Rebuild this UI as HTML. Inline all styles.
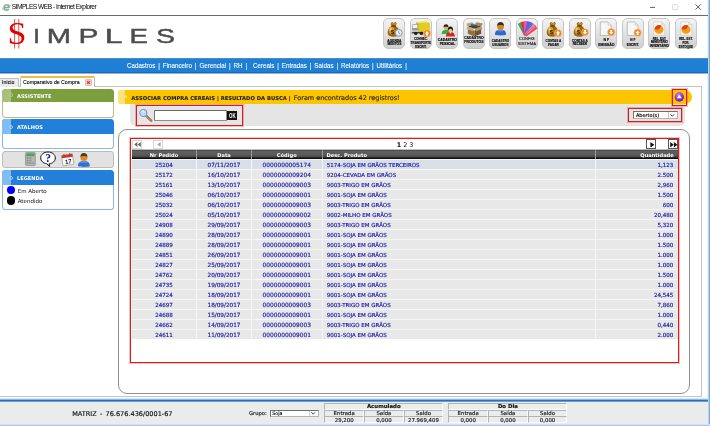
<!DOCTYPE html>
<html lang="pt-BR"><head><meta charset="utf-8"><title>SIMPLES WEB</title>
<style>
*{box-sizing:border-box;margin:0;padding:0}
html,body{width:710px;height:426px;overflow:hidden;background:#fff}
body{position:relative;font-family:"DejaVu Sans","Liberation Sans",sans-serif;font-size:5.7px;color:#000}
#w{position:absolute;left:0;top:0;width:710px;height:426px;will-change:transform;overflow:hidden}
#w>div,#w>svg,.p{position:absolute}
.ls{font-family:"Liberation Sans",sans-serif}
/* window chrome */
#title{left:11.7px;top:3.4px;font:6.6px "Liberation Sans",sans-serif;letter-spacing:-.5px;color:#000;white-space:nowrap;line-height:8px}
#tline{left:0;top:15px;width:708px;height:1px;background:#6a6a6a}
#rstrip{left:707px;top:0;width:3px;height:426px;background:linear-gradient(90deg,#e8f3fb 0,#e8f3fb 33.3%,#b8d5ee 33.3%,#b8d5ee 66.6%,#7ea6ce 66.6%)}
/* menu */
#menu{left:0;top:58px;width:708px;height:16px;background:#1f7fd4;border-top:1px solid #4a8cc8;border-bottom:1px solid #8db6dc;box-shadow:inset 0 -1px 0 #1c68b2}
#menutxt{left:126.7px;top:62.3px;font:7.1px "Liberation Sans",sans-serif;word-spacing:1.38px;transform:scaleX(.877);transform-origin:0 0;-webkit-text-stroke:0.1px #fff;color:#fff;white-space:pre;line-height:8px}
/* toolbar buttons */
.tb{position:absolute;top:18px;width:22px;height:30.5px;border:1px solid #c6c6c6;border-radius:5px;background:linear-gradient(#f4f4f4,#e4e4e4 45%,#cfcfcf);}
.tb svg{position:absolute;left:2px;top:2px;width:17px;height:17px;overflow:visible}
.tb span{position:absolute;left:-4px;width:28px;text-align:center;font:bold 3.1px/3.9px "Liberation Sans",sans-serif;color:#000;white-space:nowrap;-webkit-text-stroke:0.12px #000}
/* tabs */
#cont{left:-1px;top:86px;width:702.5px;height:311px;border:1px solid #c4c4c4}
#tab1{left:-1px;top:77.5px;width:20px;height:9px;background:#ececec;border:1px solid #bdbdbd;border-bottom:none;border-radius:1px 1px 0 0}
#tab2{left:19.5px;top:76px;width:75px;height:11px;background:#fff;border:1px solid #bdbdbd;border-top:2px solid #f3ba48;border-bottom:none;border-radius:1.5px 1.5px 0 0}
.tabt{position:absolute;font:6px/7px "Liberation Sans",sans-serif;color:#000;white-space:nowrap;transform:scaleX(.866);transform-origin:0 0;-webkit-text-stroke:0.12px #000}
/* side panels */
.sp{position:absolute;left:2px;width:111.5px}
.sp .h{position:absolute;left:0;top:0;width:111.5px;height:13.6px;border-radius:3.5px 3.5px 0 0;overflow:hidden}
.sp .l{position:absolute;left:0;top:0;width:8.5px;height:15px}
.sp .d{position:absolute;left:6.7px;top:5.6px;width:4px;height:4px;border-radius:50%;border:0.7px solid #fff;background:transparent !important}
.sp .t{position:absolute;left:15px;top:4.8px;font:bold 5.05px/7px "DejaVu Sans",sans-serif;color:#fff;white-space:nowrap}
.sp .b{position:absolute;left:0;top:13.6px;width:111.5px;border:1px solid #86b8ea;border-top:none;border-radius:0 0 3.5px 3.5px;background:#fff}
.leg{position:absolute;left:17.7px;font:5.5px/7px "DejaVu Sans",sans-serif;color:#111;white-space:nowrap}
/* main */
#ybar{left:117.7px;top:89.7px;width:574px;height:14.3px;background:#fdc400;border-radius:3.5px 7px 7px 3.5px;overflow:hidden}
#gbox{left:129.5px;top:104px;width:555.5px;height:22.3px;background:#e5e5e5;border-radius:0 0 5px 5px}
.red{position:absolute;border:1px solid #e01818;box-shadow:0 0 0 1px rgba(224,24,24,.28)}
#inner{left:118px;top:129px;width:572px;height:265px;border:1px solid #8e8e8e;border-radius:9px;background:#fff}
#thead{left:132px;top:150px;width:546px;height:9px;box-shadow:0 -1px 0 rgba(70,70,70,.35);background:linear-gradient(#3e3e3e 0,#5f5f5f 12%,#5a5a5a 55%,#484848 75%,#141414 90%,#0a0a0a)}
.th{position:absolute;top:1.6px;font:bold 5.1px/7px "DejaVu Sans",sans-serif;color:#fff;white-space:nowrap}
.sep{position:absolute;top:0;width:1px;height:9px;background:#9a9a9a}
.tr{position:absolute;left:132px;width:546px;height:10px;background:#e8e8e8;border-top:1px solid #f6f6f6;color:#1818a8;font:5.8px/9px "DejaVu Sans",sans-serif;white-space:nowrap;-webkit-text-stroke:0.17px #1818a8}
.tr.hl{background:#d9dfe6}
.tr span{position:absolute;top:1.2px}
.c1{left:0;width:64px;text-align:center;font-size:5.55px}
.c2{left:65px;width:54px;text-align:center;font-size:5.72px}
.c3{left:120px;width:69.5px;text-align:center;font-size:5.88px}
.c4{left:194.7px;font-size:5.5px}
.c5{right:4.7px;text-align:right;font-size:5.55px}
.vs{position:absolute;top:159px;width:1px;height:180px;background:#f5f5f5}
.nb{position:absolute;top:140px;width:10px;height:9px;border:1px solid #d8d8d8;background:#fff}
/* footer */
#fband{left:0;top:398px;width:708px;height:4px;background:linear-gradient(#d6e7f7 0,#d6e7f7 25%,#86b9e8 25%,#86b9e8 50%,#2272c8 50%,#2272c8 75%,#6f99c9 75%)}
#fbg{left:0;top:402px;width:708px;height:22px;background:#ebebeb}
#fbl{left:0;top:424px;width:710px;height:2px;background:linear-gradient(#d2e1f1 0,#d2e1f1 50%,#a9c8ea 50%)}
.ft{position:absolute;font:5.3px/7px "DejaVu Sans",sans-serif;color:#111;white-space:nowrap;-webkit-text-stroke:0.15px #111}
.cell{position:absolute;height:7px;background:#ececec;border:1px solid #fcfcfc;border-top-color:#b4b4b4;border-left-color:#b4b4b4;text-align:center;font:5.4px/6px "DejaVu Sans",sans-serif;color:#111;-webkit-text-stroke:0.15px #111}

</style></head>
<body><div id="w">
<!-- window chrome -->
<div id="rstrip"></div>
<svg style="left:1.500px;top:2.800px" width="9" height="9" viewBox="0 0 9 9">
  <circle cx="4.600" cy="4.600" r="3.300" fill="#4aa6e6"/>
  <circle cx="4.600" cy="4.500" r="1.700" fill="#e4f2fc"/>
  <rect x="2.600" y="4.100" width="5.200" height="1" fill="#4aa6e6"/>
  <rect x="5" y="5.100" width="3.200" height="1.100" fill="#fff"/>
  <ellipse cx="4.400" cy="4.300" rx="4.300" ry="1.900" fill="none" stroke="#f0c63c" stroke-width="0.800" transform="rotate(-30 4.400 4.300)"/>
</svg>
<div id="title">SIMPLES WEB - Internet Explorer</div>
<svg style="left:645px;top:2px" width="60" height="12" viewBox="0 0 60 12">
  <path d="M5 5.4h5" stroke="#222" stroke-width="0.7" fill="none"/>
  <rect x="27.4" y="2.6" width="5.4" height="5" rx="0.6" fill="none" stroke="#c8c8c8" stroke-width="0.6"/>
  <path d="M50.5 2.3l5.4 5.4M55.9 2.3l-5.4 5.4" stroke="#222" stroke-width="0.75" fill="none"/>
</svg>
<div id="tline"></div>

<!-- logo -->
<svg style="left:0;top:16px" width="190" height="40" viewBox="0 0 190 40">
  <defs>
    <linearGradient id="lg" gradientUnits="userSpaceOnUse" x1="35" y1="8" x2="178" y2="30">
      <stop offset="0" stop-color="#4c4c4c"/><stop offset="0.55" stop-color="#626262"/><stop offset="1" stop-color="#9c9c9c"/>
    </linearGradient>
  </defs>
  <text transform="translate(7.55 28.4) scale(1.1 1)" font-family="Liberation Serif, serif" font-size="31" fill="#e00000">S</text>
  <path d="M14.6 3v29.6M18.8 3v29.6" stroke="#e00000" stroke-width="0.7" fill="none"/>
  <g font-family="Liberation Sans, sans-serif" font-size="20.6" fill="url(#lg)" stroke="url(#lg)" stroke-width="0.45">
    <text transform="translate(33.24 27) scale(1.154 1)">I</text>
    <text transform="translate(46.63 27) scale(1.413 1)">M</text>
    <text transform="translate(78.46 27) scale(1.455 1)">P</text>
    <text transform="translate(104.82 27) scale(1.543 1)">L</text>
    <text transform="translate(129.54 27) scale(1.341 1)">E</text>
    <text transform="translate(156.01 27) scale(1.382 1)">S</text>
  </g>
</svg>

<!-- toolbar -->
<div class="tb" style="left:383.4px">
  <svg viewBox="0 0 17 17"><g transform="translate(-1.6 -0.9) scale(1.13)"><path d="M5.500 3.200l1.200-1.600 1.600.9 1.700-1 1 1.800-1.300 1.600c2.600 1.600 3.900 4.500 3.300 7.200-.4 1.900-2.200 2.600-5 2.600s-4.700-.7-5-2.600c-.5-2.800.9-5.600 3.400-7.200z" fill="#9a6410"/><path d="M6.200 3.400l.9-1.100 1.300.7 1.400-.8.600 1.100-1 1.300z" fill="#c89028"/><path d="M6 5.200h4.200" stroke="#5a3608" stroke-width="0.900"/><ellipse cx="6.400" cy="9.300" rx="2.500" ry="3.400" fill="#d49a2c"/><ellipse cx="5.600" cy="8.200" rx="1.100" ry="1.700" fill="#f0c860"/><text x="5.600" y="11.900" font-family="Liberation Sans, sans-serif" font-size="5.400" font-weight="bold" fill="#2a1a04">$</text></g><circle cx="12.700" cy="11.800" r="3.500" fill="#d4dce6" stroke="#8792a2" stroke-width="0.800"/><circle cx="12.700" cy="11.800" r="2.300" fill="#f2f5f8"/><path d="M12.700 10v2l1.300.8" stroke="#4a5666" stroke-width="0.600" fill="none"/></svg>
  <span style="top:20.5px;font-size:3.250px">AGENDA</span><span style="top:24.4px;font-size:3.250px">MENTOS</span>
</div>
<div class="tb" style="left:409.9px">
  <svg viewBox="0 0 17 17"><path d="M3 1.200l10.600-.700 3 1.600v8.700h-13.600z" fill="#d6c412"/><path d="M3 1.200l10.600-.700 3 1.600-10.800.5z" fill="#efe25a"/><path d="M5.800 2.600l10.800-.5v8.700h-10.800z" fill="#e0cf1e"/><path d="M-1 5.200c0-1.400.8-2.200 2.200-2.200h4v8.200h-6.200z" fill="#9a9a9a"/><path d="M-0.400 5.400c0-1 .5-1.600 1.500-1.600h3.300v3.300h-4.800z" fill="#eef2f6"/><rect x="-1.200" y="9.400" width="6.600" height="2" fill="#d8d8d8"/><rect x="-1.200" y="10.900" width="17.800" height="1.500" fill="#3c3c3c"/><circle cx="2.800" cy="12.400" r="1.700" fill="#1c1c1c"/><circle cx="8.400" cy="12.400" r="1.700" fill="#1c1c1c"/><circle cx="14" cy="12.4" r="3.7" fill="#f0861a" stroke="#f9c890" stroke-width="0.600"/><path d="M14 10.0l2.200 2.500h-1.300v2.100h-1.800v-2.100h-1.300z" fill="#fff"/></svg>
  <span style="top:19.4px;font-size:2.900px">CONHEC.</span><span style="top:23.1px;font-size:2.950px">TRANSPORTE</span><span style="top:26.8px;font-size:2.950px">ESCRIT.</span>
</div>
<div class="tb" style="left:436.4px">
  <svg viewBox="0 0 17 17"><g transform="translate(1.200 1) scale(0.900)"><circle cx="6.400" cy="6.100" r="2.600" fill="#e7b27a"/><path d="M3.700 5.700c0-2.300 1.200-3.200 2.800-3.200s2.700 1 2.600 3c-1.700.2-3.400-.5-5.400.2z" fill="#2e2010"/><path d="M1.600 13.300c0-3.300 2-4.700 4.800-4.700s4.800 1.400 4.800 4.700z" fill="#34b048"/><circle cx="11.300" cy="8.800" r="2.700" fill="#ecc090"/><path d="M8.400 9.200c-.3-2.700 1-4.200 2.900-4.200s3.300 1.400 2.900 4.400l-.6 1.700c.2-2.100-.4-3.600-2.300-3.600s-2.600 1.500-2.300 3.500z" fill="#24140a"/><path d="M6.300 16c0-3.300 2.100-4.900 5-4.900s5 1.600 5 4.900z" fill="#d22820"/><path d="M10 11.200l1.300 2.100 1.300-2.100z" fill="#f3d9c0"/></g></svg>
  <span style="top:19.8px;font-size:3.400px">CADASTRO</span><span style="top:24.2px;font-size:3.250px">PESSOAL</span>
</div>
<div class="tb" style="left:462.9px">
  <svg viewBox="0 0 17 17"><g transform="translate(0 -0.600)"><path d="M1.800 6.200l6.700 2.200v7.600l-6.700-2.600z" fill="#8e7044"/><path d="M8.500 8.400l6.700-2.200v7.200l-6.700 2.600z" fill="#6e5430"/><path d="M1.800 6.200l6.700-2.200 6.700 2.200-6.700 2.200z" fill="#3e4046"/><path d="M1.800 6.200l-1.500-2.900 6-1.500 2.200 2.200z" fill="#bfa070"/><path d="M15.200 6.200l1.600-3-6.100-1.400-2.200 2.200z" fill="#a88a58"/><path d="M15.200 6.200l1.200 2.500-6.400 2.300-1.500-2.600z" fill="#b4955f"/><path d="M1.800 6.200l-1.300 2.300 6.500 2.300 1.500-2.400z" fill="#c9ab7c"/><rect x="4.800" y="4" width="5" height="1.700" fill="#3058a0" transform="rotate(12 7 5)"/><circle cx="8.300" cy="9.200" r="0.900" fill="#f4f4f4"/></g></svg>
  <span style="top:17.8px;font-size:3.450px">CADASTRO</span><span style="top:22.3px;font-size:3.450px">PRODUTOS</span>
</div>
<div class="tb" style="left:489.4px">
  <svg viewBox="0 0 17 17"><g transform="translate(0.700 -1.200) scale(0.920)"><path d="M2.500 16.300c-.3-4 2.300-5.800 6-5.800s6.300 1.800 6 5.800c-2 .9-10 .9-12 0z" fill="#2b68d0"/><path d="M4.500 12c1.200-1 2.500-1.400 4-1.400s2.800.4 4 1.400c-1 .8-7 .8-8 0z" fill="#5d97ee"/><circle cx="8.500" cy="7.300" r="3.700" fill="#d8841c"/><path d="M4.800 6.600c-.2-2.900 1.500-4.300 3.700-4.300s3.900 1.400 3.700 4.300c-1.400-1.400-6-1.400-7.400 0z" fill="#3e3024"/></g></svg>
  <span style="top:20.5px">CADASTRO</span><span style="top:25px">USUÁRIOS</span>
</div>
<div class="tb" style="left:515.9px">
  <svg viewBox="0 0 17 17"><g transform="translate(6.500 14.200)"><path d="M-1.500 0l-1.400-13.600 3.600 0 0.800 13.600z" fill="#2fae6c" transform="rotate(-22)"/><path d="M-1.500 0l-1.400-13.800 3.600 0 0.800 13.800z" fill="#e23434" transform="rotate(-8)"/><path d="M-1.500 0l-1.400-14 3.600 0 0.800 14z" fill="#e85ab8" transform="rotate(6)"/><path d="M-1.500 0l-1.400-14 3.600 0 0.800 14z" fill="#8a4ad8" transform="rotate(19)"/><path d="M-1.500 0l-1.400-14 3.600 0 0.800 14z" fill="#3a7ae6" transform="rotate(32)"/><path d="M-1.500 0l-1.400-14 3.600 0 0.800 14z" fill="#f27a9a" transform="rotate(46)"/><path d="M-1.500 0l-1.400-13.600 3.600 0 0.800 13.600z" fill="#ea4a5e" transform="rotate(58)"/><path d="M-0.300 -2l-0.500 -11" stroke="#fff" stroke-width="0.400" transform="rotate(52)"/></g></svg>
  <span style="top:18.4px;font-weight:normal;font-size:4px;color:#333">CONFIG</span><span style="top:22.4px;font-weight:normal;font-size:4.200px;line-height:5px;color:#333">SISTEMA</span>
</div>
<div class="tb" style="left:542.4px">
  <svg viewBox="0 0 17 17"><g transform="translate(-1.6 -0.9) scale(1.13)"><path d="M5.500 3.200l1.200-1.600 1.600.9 1.700-1 1 1.800-1.300 1.600c2.600 1.600 3.900 4.500 3.300 7.200-.4 1.900-2.200 2.600-5 2.600s-4.700-.7-5-2.600c-.5-2.800.9-5.600 3.400-7.200z" fill="#9a6410"/><path d="M6.200 3.400l.9-1.100 1.300.7 1.400-.8.600 1.100-1 1.300z" fill="#c89028"/><path d="M6 5.200h4.200" stroke="#5a3608" stroke-width="0.900"/><ellipse cx="6.400" cy="9.300" rx="2.500" ry="3.400" fill="#d49a2c"/><ellipse cx="5.600" cy="8.200" rx="1.100" ry="1.700" fill="#f0c860"/><text x="5.600" y="11.900" font-family="Liberation Sans, sans-serif" font-size="5.400" font-weight="bold" fill="#2a1a04">$</text></g><circle cx="13" cy="12.2" r="3.7" fill="#f0861a" stroke="#f9c890" stroke-width="0.600"/><path d="M13 9.799999999999999l2.200 2.500h-1.300v2.100h-1.800v-2.100h-1.300z" fill="#fff"/></svg>
  <span style="top:20.9px">CONTAS A</span><span style="top:24.6px">PAGAR</span>
</div>
<div class="tb" style="left:568.9px">
  <svg viewBox="0 0 17 17"><g transform="translate(-1.6 -0.9) scale(1.13)"><path d="M5.500 3.200l1.200-1.600 1.600.9 1.700-1 1 1.800-1.300 1.600c2.600 1.600 3.900 4.500 3.300 7.200-.4 1.900-2.200 2.600-5 2.600s-4.700-.7-5-2.600c-.5-2.800.9-5.600 3.400-7.200z" fill="#9a6410"/><path d="M6.200 3.400l.9-1.100 1.300.7 1.400-.8.600 1.100-1 1.300z" fill="#c89028"/><path d="M6 5.200h4.200" stroke="#5a3608" stroke-width="0.900"/><ellipse cx="6.400" cy="9.300" rx="2.500" ry="3.400" fill="#d49a2c"/><ellipse cx="5.600" cy="8.200" rx="1.100" ry="1.700" fill="#f0c860"/><text x="5.600" y="11.900" font-family="Liberation Sans, sans-serif" font-size="5.400" font-weight="bold" fill="#2a1a04">$</text></g><circle cx="13" cy="11.2" r="3.5" fill="#f0861a" stroke="#f9c890" stroke-width="0.600"/><path d="M13 13.6l2.200-2.500h-1.300v-2.100h-1.800v2.100h-1.300z" fill="#fff"/></svg>
  <span style="top:20.6px">CONTAS A</span><span style="top:24.2px;font-size:2.950px">RECEBER</span>
</div>
<div class="tb" style="left:595.4px">
  <svg viewBox="0 0 17 17"><path d="M2.300 1h7.600l3.200 3.200v10.300h-10.800z" fill="#f7f7f7" stroke="#a8a8a8" stroke-width="0.700"/><path d="M9.900 1v3.200h3.200" fill="#e4e4e4" stroke="#c2c2c2" stroke-width="0.500"/><circle cx="13.2" cy="11.2" r="3.7" fill="#f0861a" stroke="#f9c890" stroke-width="0.600"/><path d="M13.2 13.6l2.200-2.500h-1.300v-2.100h-1.800v2.100h-1.300z" fill="#fff"/></svg>
  <span style="top:20.4px;font-size:3.550px">N F</span><span style="top:24.6px;font-size:3.550px">EMISSÃO</span>
</div>
<div class="tb" style="left:621.9px">
  <svg viewBox="0 0 17 17"><path d="M2.300 1h7.600l3.200 3.200v10.300h-10.800z" fill="#f7f7f7" stroke="#a8a8a8" stroke-width="0.700"/><path d="M9.900 1v3.200h3.200" fill="#e4e4e4" stroke="#c2c2c2" stroke-width="0.500"/><circle cx="12.6" cy="11.8" r="3.7" fill="#f0861a" stroke="#f9c890" stroke-width="0.600"/><path d="M12.6 9.4l2.200 2.500h-1.300v2.100h-1.800v-2.100h-1.300z" fill="#fff"/></svg>
  <span style="top:20.4px;font-size:3.200px">N F</span><span style="top:24.6px;font-size:3.200px">ESCRIT.</span>
</div>
<div class="tb" style="left:648.4px">
  <svg viewBox="0 0 17 17"><path d="M2.600 0.800h8.200l3 3v10.400h-11.200z" fill="#f7f7f7" stroke="#c6c6c6" stroke-width="0.600"/><path d="M10.800 0.800v3h3" fill="#e4e4e4" stroke="#c2c2c2" stroke-width="0.500"/><circle cx="8" cy="8.600" r="4.500" fill="#f49a18"/><path d="M8 8.600l-4.500-.4a4.500 4.500 0 0 1 6.900-3.400z" fill="#d8460e"/><path d="M4.600 11.300a4.300 4.300 0 0 0 6.800 0 9 9 0 0 1-6.800 0z" fill="#fbc648"/></svg>
  <span style="top:19px;font-size:2.900px">REL. EST.</span><span style="top:22.3px;font-size:2.900px">MINISTÉRIO</span><span style="top:25.8px">INVENTÁRIO</span>
</div>
<div class="tb" style="left:674.9px">
  <svg viewBox="0 0 17 17"><path d="M2.600 0.800h8.200l3 3v10.400h-11.200z" fill="#f7f7f7" stroke="#c6c6c6" stroke-width="0.600"/><path d="M10.800 0.800v3h3" fill="#e4e4e4" stroke="#c2c2c2" stroke-width="0.500"/><circle cx="8" cy="8.600" r="4.500" fill="#f49a18"/><path d="M8 8.600l-4.500-.4a4.500 4.500 0 0 1 6.900-3.400z" fill="#d8460e"/><path d="M4.600 11.300a4.300 4.300 0 0 0 6.800 0 9 9 0 0 1-6.800 0z" fill="#fbc648"/></svg>
  <span style="top:19.2px;font-size:2.900px">REL. EST.</span><span style="top:22.7px;font-size:2.800px">POR.</span><span style="top:26.6px;font-size:2.900px">ESTOQUE</span>
</div>

<!-- menu -->
<div id="menu"></div>
<div id="menutxt">Cadastros | Financeiro | Gerencial | RH |  Cereais | Entradas | Saídas | Relatórios | Utilitários |</div>

<!-- tabs -->
<div id="cont"></div>
<div id="tab1"><span class="tabt" style="left:1.9px;top:0.9px">Início</span></div>
<div id="tab2"><span class="tabt" style="left:2.8px;top:0.9px">Comparativo de Compra</span>
  <svg style="position:absolute;left:64.7px;top:1.3px" width="7" height="7" viewBox="0 0 7 7"><rect x="0.400" y="0.400" width="6.200" height="6.200" rx="0.800" fill="#f7d2d2" stroke="#cfa4a4" stroke-width="0.700"/><path d="M2.100 2.100l2.800 2.800M4.900 2.100l-2.800 2.800" stroke="#e03434" stroke-width="1.300"/></svg>
</div>

<!-- side panels -->
<div class="sp" style="top:88.6px;height:29px">
  <div class="b" style="height:15.400px;border-color:#b9b98f"></div>
  <div class="h" style="background:#7c9e3c"><div class="l" style="background:#a9c07c"></div><div class="d" style="border-color:#b4c98c;top:4.900px"></div></div>
  <span class="t">ASSISTENTE</span>
</div>
<div class="sp" style="top:119.200px;height:29.400px">
  <div class="b" style="height:15.400px;top:14px"></div>
  <div class="h" style="background:#2280da;height:14.400px"><div class="l" style="background:#80bdf4"></div><div class="d" style="border-color:#a4d2fa;border-width:0.9px"></div></div>
  <span class="t" style="top:5.100px">ATALHOS</span>
</div>
<div class="p" style="left:2px;top:151.300px;width:111.500px;height:16.500px;background:#e2e2e2;border:1px solid #bcbcbc;border-radius:3px"></div>
<svg style="left:24px;top:151px" width="70" height="17" viewBox="0 0 70 17">
  <!-- calculator -->
  <rect x="1.500" y="1.600" width="9.800" height="13" rx="0.800" fill="#b2b6b0" stroke="#868b86" stroke-width="0.700"/>
  <rect x="2.400" y="2.400" width="8" height="2.800" fill="#48a860"/>
  <g fill="#8c918c"><rect x="2.600" y="6.300" width="1.900" height="1.600"/><rect x="5.400" y="6.300" width="1.900" height="1.600"/><rect x="8.200" y="6.300" width="1.900" height="1.600" fill="#e8b070"/><rect x="2.600" y="8.800" width="1.900" height="1.600"/><rect x="5.400" y="8.800" width="1.900" height="1.600"/><rect x="8.200" y="8.800" width="1.900" height="1.600" fill="#e8b070"/><rect x="2.600" y="11.300" width="1.900" height="1.600"/><rect x="5.400" y="11.300" width="1.900" height="1.600"/><rect x="8.200" y="11.300" width="1.900" height="1.600" fill="#7aa0e0"/></g>
  <!-- help bubble -->
  <path d="M24 1c4.200 0 7.300 2.500 7.300 5.900s-2.700 5.600-6.200 5.900l.6 2.700-3-2.800c-3.500-.5-6-2.700-6-5.800 0-3.400 3.100-5.900 7.300-5.900z" fill="#fff" stroke="#111" stroke-width="1"/>
  <text x="21.300" y="10.900" font-family="Liberation Serif, serif" font-weight="bold" font-size="11.500" fill="#14149c">?</text>
  <!-- calendar -->
  <g transform="rotate(-8 43.500 9)"><rect x="38.200" y="3.600" width="11" height="10.600" rx="0.800" fill="#fbfbfb" stroke="#8a8a8a" stroke-width="0.600"/><rect x="38.200" y="3.600" width="11" height="3" fill="#d8322a"/><text x="40.600" y="12.900" font-family="Liberation Sans, sans-serif" font-weight="bold" font-size="6.200" fill="#222">17</text><rect x="40.300" y="2.400" width="0.900" height="2.400" fill="#555"/><rect x="46.200" y="2.400" width="0.900" height="2.400" fill="#555"/></g>
  <!-- user -->
  <path d="M54 15.300c-.3-3.800 2.200-5.400 5.900-5.400s6.200 1.600 5.900 5.400c-2 .8-9.800.8-11.800 0z" fill="#2f6fd6"/>
  <path d="M56 11.300c1.200-.9 2.400-1.300 3.900-1.300s2.700.4 3.900 1.300c-1 .7-6.800.7-7.800 0z" fill="#5d97ee"/>
  <circle cx="59.900" cy="6.600" r="3.500" fill="#e08a1e"/>
  <path d="M56.400 6c-.2-2.800 1.400-4.100 3.500-4.100s3.700 1.300 3.500 4.100c-1.300-1.300-5.700-1.300-7-0z" fill="#4a3a2a"/>
</svg>
<div class="sp" style="top:170.200px;height:39.400px">
  <div class="b" style="height:25.600px;top:14px"></div>
  <div class="h" style="background:#2280da;height:14.400px"><div class="l" style="background:#80bdf4"></div><div class="d" style="border-color:#a4d2fa;border-width:0.9px"></div></div>
  <span class="t" style="top:5.100px">LEGENDA</span>
  <div style="position:absolute;left:4.700px;top:15.500px;width:8.600px;height:8.600px;border-radius:50%;background:#0000fe"></div>
  <div style="position:absolute;left:4.700px;top:26px;width:8.600px;height:8.600px;border-radius:50%;background:#000"></div>
  <span class="leg" style="left:15.700px;top:17.900px">Em Aberto</span>
  <span class="leg" style="left:15.700px;top:28.300px">Atendido</span>
</div>

<!-- main area -->
<div id="ybar"><div style="position:absolute;left:0;top:0;width:7.500px;height:14.300px;background:#ffe27a"></div><div style="position:absolute;left:6px;top:5.400px;width:3.200px;height:3.200px;border-radius:50%;background:#ffe27a"></div></div>
<div class="p" style="left:131.300px;top:94.700px;font:bold 5.250px/7px 'DejaVu Sans',sans-serif;color:#222;-webkit-text-stroke:0.1px #222;white-space:nowrap">ASSOCIAR COMPRA CEREAIS | RESULTADO DA BUSCA |</div>
<div class="p" style="left:293.800px;top:93.500px;font:6.480px/8px 'DejaVu Sans',sans-serif;color:#26261a;-webkit-text-stroke:0.15px #26261a;white-space:nowrap">Foram encontrados 42 registros!</div>
<svg style="left:674px;top:92px" width="11" height="11" viewBox="0 0 11 11"><defs><radialGradient id="pg" cx="0.400" cy="0.300" r="0.800"><stop offset="0" stop-color="#d07af0"/><stop offset="0.600" stop-color="#8a2fd0"/><stop offset="1" stop-color="#5a14a0"/></radialGradient></defs><circle cx="5.300" cy="5" r="4.700" fill="url(#pg)"/><path d="M5.300 2.600l2.500 3.600h-5z" fill="#fff"/></svg>
<div id="gbox"></div>
<div class="red" style="left:671.700px;top:89.200px;width:15.200px;height:16.500px"></div>
<div class="red" style="left:135.500px;top:105.200px;width:107.800px;height:20.400px"></div>
<svg style="left:139px;top:108px" width="15" height="15" viewBox="0 0 15 15"><path d="M7.200 7.900l5 4.700" stroke="#86683c" stroke-width="2.300" stroke-linecap="round"/><path d="M7.200 7.900l5 4.700" stroke="#d8b478" stroke-width="0.800" stroke-linecap="round"/><circle cx="4.300" cy="5" r="3.500" fill="#c4dcf8" stroke="#7494d8" stroke-width="1.100"/><path d="M2.300 4.300a2.400 2.400 0 0 1 2.500-1.700" stroke="#fff" stroke-width="0.800" fill="none"/></svg>
<div class="p" style="left:154.300px;top:110.300px;width:72.600px;height:10.400px;background:#fff;border:1px solid #8e8e8e;border-top-color:#6a6a6a;border-left-color:#767676;border-radius:1px"></div>
<div class="p" style="left:227px;top:110.800px;width:9.800px;height:9.200px;background:#111"><span style="position:absolute;left:1.600px;top:1.100px;color:#fff;font:bold 6.300px/7px 'Liberation Sans',sans-serif;transform:scaleX(.7);transform-origin:0 0">OK</span></div>
<div class="red" style="left:628.300px;top:108.200px;width:54px;height:14px"></div>
<div class="p" style="left:633.400px;top:111px;width:44.800px;height:8.400px;background:#fff;border:1px solid #b4b4b4;border-top-color:#6e6e6e;border-left-color:#6e6e6e"><span style="position:absolute;left:1.500px;top:0.200px;font:5px/6px 'DejaVu Sans',sans-serif;color:#000;-webkit-text-stroke:0.15px #000">Aberto(s)</span><div style="position:absolute;right:0;top:0;width:9.500px;height:6.400px;background:#fafafa;border-left:1px solid #c8c8c8"></div><svg style="position:absolute;right:2.300px;top:1.900px" width="4.600" height="3" viewBox="0 0 4.600 3"><path d="M0.500 0.400l1.800 1.900 1.800-1.900" fill="none" stroke="#222" stroke-width="0.800"/></svg></div>

<div id="inner"></div>
<div class="red" style="left:129.600px;top:138.400px;width:549.400px;height:224.500px;border-color:#dc1c1c"></div>
<!-- pager -->
<div class="nb" style="left:132px"><svg style="position:absolute;left:1px;top:1.300px" width="7" height="5" viewBox="0 0 7 5"><path d="M3.400 0v5l-3.200-2.500zM6.800 0v5l-3.200-2.500z" fill="#6a6a6a"/></svg></div>
<div class="nb" style="left:153.400px"><svg style="position:absolute;left:2.500px;top:1.300px" width="4" height="5" viewBox="0 0 4 5"><path d="M3.600 0v5l-3.400-2.500z" fill="#a8a8a8"/></svg></div>
<div class="nb" style="left:646.300px;top:139px;height:10px;border-color:#555"><svg style="position:absolute;left:2.300px;top:1.500px" width="4.600" height="5.600" viewBox="0 0 4 5"><path d="M0.300 0v5l3.500-2.500z" fill="#111"/></svg></div>
<div class="nb" style="left:668.400px;top:139px;height:10px;border-color:#555"><svg style="position:absolute;left:0.600px;top:1.500px" width="7.600" height="5.600" viewBox="0 0 7 5"><path d="M0.200 0v5l3.200-2.500zM3.600 0v5l3.200-2.500z" fill="#111"/></svg></div>
<div class="p" style="left:385px;top:140.900px;width:40px;text-align:center;font:6.400px/8px 'DejaVu Sans',sans-serif;color:#111;white-space:nowrap"><b>1</b> 2 3</div>
<!-- table -->
<div id="thead">
  <span class="th" style="left:0;width:64px;text-align:center">Nr Pedido</span>
  <span class="th" style="left:65px;width:54px;text-align:center">Data</span>
  <span class="th" style="left:120px;width:69.500px;text-align:center">Código</span>
  <span class="th" style="left:194.500px">Desc. Produto</span>
  <span class="th" style="right:4.300px">Quantidade</span>
  <div class="sep" style="left:64px"></div><div class="sep" style="left:119px"></div><div class="sep" style="left:189.500px"></div><div class="sep" style="left:463px"></div>
</div>
<div class="tr hl" style="top:159px"><span class="c1">25204</span><span class="c2">07/11/2017</span><span class="c3">0000000005174</span><span class="c4">5174-SOJA EM GRÃOS TERCEIROS</span><span class="c5">1,123</span></div>
<div class="tr" style="top:169px"><span class="c1">25172</span><span class="c2">16/10/2017</span><span class="c3">0000000009204</span><span class="c4">9204-CEVADA EM GRÃOS</span><span class="c5">2.500</span></div>
<div class="tr" style="top:179px"><span class="c1">25161</span><span class="c2">13/10/2017</span><span class="c3">0000000009003</span><span class="c4">9003-TRIGO EM GRÃOS</span><span class="c5">2,960</span></div>
<div class="tr" style="top:189px"><span class="c1">25046</span><span class="c2">06/10/2017</span><span class="c3">0000000009001</span><span class="c4">9001-SOJA EM GRÃOS</span><span class="c5">1.500</span></div>
<div class="tr" style="top:199px"><span class="c1">25032</span><span class="c2">06/10/2017</span><span class="c3">0000000009003</span><span class="c4">9003-TRIGO EM GRÃOS</span><span class="c5">600</span></div>
<div class="tr" style="top:209px"><span class="c1">25024</span><span class="c2">05/10/2017</span><span class="c3">0000000009002</span><span class="c4">9002-MILHO EM GRÃOS</span><span class="c5">20,480</span></div>
<div class="tr" style="top:219px"><span class="c1">24908</span><span class="c2">29/09/2017</span><span class="c3">0000000009003</span><span class="c4">9003-TRIGO EM GRÃOS</span><span class="c5">5,320</span></div>
<div class="tr" style="top:229px"><span class="c1">24890</span><span class="c2">28/09/2017</span><span class="c3">0000000009001</span><span class="c4">9001-SOJA EM GRÃOS</span><span class="c5">1.000</span></div>
<div class="tr" style="top:239px"><span class="c1">24889</span><span class="c2">28/09/2017</span><span class="c3">0000000009001</span><span class="c4">9001-SOJA EM GRÃOS</span><span class="c5">1.500</span></div>
<div class="tr" style="top:249px"><span class="c1">24851</span><span class="c2">26/09/2017</span><span class="c3">0000000009001</span><span class="c4">9001-SOJA EM GRÃOS</span><span class="c5">1.000</span></div>
<div class="tr" style="top:259px"><span class="c1">24827</span><span class="c2">25/09/2017</span><span class="c3">0000000009001</span><span class="c4">9001-SOJA EM GRÃOS</span><span class="c5">1.000</span></div>
<div class="tr" style="top:269px"><span class="c1">24762</span><span class="c2">20/09/2017</span><span class="c3">0000000009001</span><span class="c4">9001-SOJA EM GRÃOS</span><span class="c5">1.500</span></div>
<div class="tr" style="top:279px"><span class="c1">24735</span><span class="c2">19/09/2017</span><span class="c3">0000000009001</span><span class="c4">9001-SOJA EM GRÃOS</span><span class="c5">1.000</span></div>
<div class="tr" style="top:289px"><span class="c1">24724</span><span class="c2">18/09/2017</span><span class="c3">0000000009001</span><span class="c4">9001-SOJA EM GRÃOS</span><span class="c5">24,545</span></div>
<div class="tr" style="top:299px"><span class="c1">24697</span><span class="c2">18/09/2017</span><span class="c3">0000000009003</span><span class="c4">9003-TRIGO EM GRÃOS</span><span class="c5">7,860</span></div>
<div class="tr" style="top:309px"><span class="c1">24688</span><span class="c2">15/09/2017</span><span class="c3">0000000009001</span><span class="c4">9001-SOJA EM GRÃOS</span><span class="c5">1.000</span></div>
<div class="tr" style="top:319px"><span class="c1">24662</span><span class="c2">14/09/2017</span><span class="c3">0000000009003</span><span class="c4">9003-TRIGO EM GRÃOS</span><span class="c5">0,440</span></div>
<div class="tr" style="top:329px"><span class="c1">24611</span><span class="c2">11/09/2017</span><span class="c3">0000000009001</span><span class="c4">9001-SOJA EM GRÃOS</span><span class="c5">2.000</span></div>
<div class="vs" style="left:196px"></div><div class="vs" style="left:251px"></div><div class="vs" style="left:321.500px"></div><div class="vs" style="left:595px"></div>

<!-- footer -->
<div id="fband"></div><div id="fbg"></div><div id="fbl"></div>
<div class="ft" style="left:72.200px;top:411.200px;font-size:6.550px;word-spacing:1.100px;color:#111">MATRIZ - 76.676.436/0001-67</div>
<div class="ft" style="left:249px;top:410px;font-size:5.200px">Grupo:</div>
<div class="p" style="left:270px;top:410px;width:48.800px;height:7px;background:#fff;border:1px solid #b4b4b4;border-top-color:#6e6e6e;border-left-color:#6e6e6e"><span style="position:absolute;left:1.300px;top:-0.300px;font:4.800px/5.400px 'DejaVu Sans',sans-serif;color:#000;-webkit-text-stroke:0.12px #000">Soja</span><div style="position:absolute;right:0;top:0;width:9px;height:5px;background:#fafafa;border-left:1px solid #d0d0d0"></div><svg style="position:absolute;right:2.200px;top:1.400px" width="4.400" height="2.800" viewBox="0 0 4.400 2.800"><path d="M0.400 0.300l1.800 1.900 1.800-1.900" fill="none" stroke="#222" stroke-width="0.800"/></svg></div>
<div class="cell" style="left:324.300px;top:402.800px;width:119px;font-weight:bold"><span style="position:relative;top:-0.5px">Acumulado</span></div>
<div class="cell" style="left:324.300px;top:409.600px;width:39.800px"><span style="position:relative;top:-0.5px">Entrada</span></div>
<div class="cell" style="left:364px;top:409.600px;width:39.800px"><span style="position:relative;top:-0.5px">Saída</span></div>
<div class="cell" style="left:403.700px;top:409.600px;width:39.600px"><span style="position:relative;top:-0.5px">Saldo</span></div>
<div class="cell" style="left:324.300px;top:416.400px;width:39.800px">29,200</div>
<div class="cell" style="left:364px;top:416.400px;width:39.800px">0,000</div>
<div class="cell" style="left:403.700px;top:416.400px;width:39.600px">27.969,409</div>
<div class="cell" style="left:448.300px;top:402.800px;width:119.200px;font-weight:bold"><span style="position:relative;top:-0.5px">Do Dia</span></div>
<div class="cell" style="left:448.300px;top:409.600px;width:39.800px"><span style="position:relative;top:-0.5px">Entrada</span></div>
<div class="cell" style="left:488px;top:409.600px;width:39.800px"><span style="position:relative;top:-0.5px">Saída</span></div>
<div class="cell" style="left:527.700px;top:409.600px;width:39.800px"><span style="position:relative;top:-0.5px">Saldo</span></div>
<div class="cell" style="left:448.300px;top:416.400px;width:39.800px">0,000</div>
<div class="cell" style="left:488px;top:416.400px;width:39.800px">0,000</div>
<div class="cell" style="left:527.700px;top:416.400px;width:39.800px">0,000</div>

</div></body></html>
